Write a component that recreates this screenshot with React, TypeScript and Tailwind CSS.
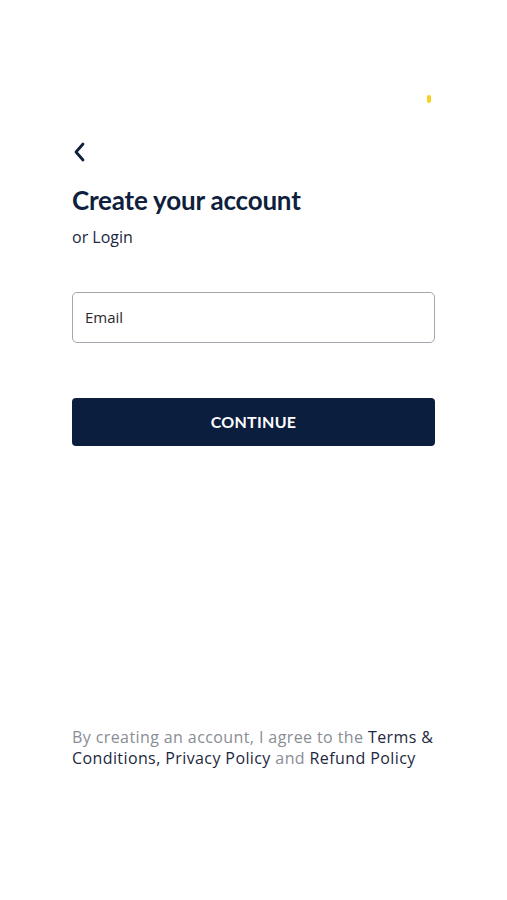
import React from "react";

export default function App() {
  return (
    <div
      className="w-[507px] h-[900px] bg-white flex flex-col px-[72px]"
      style={{ fontFamily: "Lato, 'Noto Sans', sans-serif" }}
    >
      <div className="h-[103px] flex justify-end items-end">
        <div className="mr-[4px] w-[4px] h-[8px] rounded-[2px] bg-[#f5d023]" />
      </div>
      <div className="mt-[38px] h-[22px] flex items-center">
        <svg width="14" height="22" viewBox="0 0 14 22" fill="none">
          <path d="M11 3 L4 11 L11 19" stroke="#0f1f3d" strokeWidth="2.8" strokeLinecap="round" strokeLinejoin="round" />
        </svg>
      </div>
      <h1 className="mt-[21px] text-[26px] leading-[32px] font-bold text-[#0f1f3d] tracking-[-0.2px]">
        Create your account
      </h1>
      <p
        className="mt-[10px] text-[16px] leading-[22px] text-[#1c2740]"
        style={{ fontFamily: "'Open Sans', sans-serif" }}
      >
        or Login
      </p>
      <div className="mt-[44px] h-[51px] w-full border border-[#a3a6ad] rounded-[5px] flex items-center px-[12px]">
        <span className="text-[15px] text-[#2a2a2a]" style={{ fontFamily: "'Open Sans', sans-serif" }}>
          Email
        </span>
      </div>
      <button className="mt-[55px] h-[48px] w-full bg-[#0b1e3d] rounded-[4px] text-white text-[16px] font-bold tracking-[0.3px]">
        CONTINUE
      </button>
      <p
        className="mt-[281px] text-[16px] leading-[21px] text-[#8a8d96] tracking-[0.4px]"
        style={{ fontFamily: "'Open Sans', sans-serif" }}
      >
        By creating an account, I agree to the{" "}
        <span className="text-[#1d2840]">Terms &amp; Conditions, Privacy Policy</span> and{" "}
        <span className="text-[#1d2840]">Refund Policy</span>
      </p>
    </div>
  );
}
